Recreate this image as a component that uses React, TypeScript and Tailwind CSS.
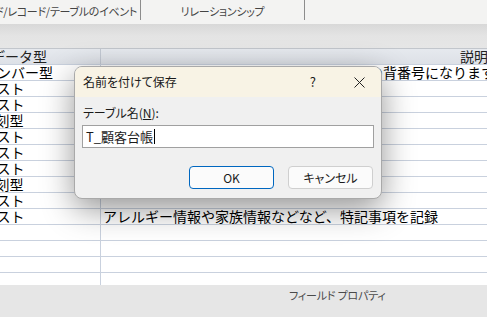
import React from "react"

const types = [
  "オートナンバー型",
  "短いテキスト",
  "短いテキスト",
  "日付/時刻型",
  "短いテキスト",
  "短いテキスト",
  "短いテキスト",
  "日付/時刻型",
  "短いテキスト",
  "長いテキスト",
]

const descs: Record<number, string> = {
  0: "顧客ごとに自動で割り振られる番号で顧客の背番号になります。",
  9: "アレルギー情報や家族情報などなど、特記事項を記録",
}

function Row({ type, desc }: { type?: string; desc?: string }) {
  const shift = type && type.includes("/") ? "ml-[-52px]" : "ml-[-59px]"
  return (
    <div className="flex h-4 shrink-0 border-t border-[#c9d1de] text-[14px] leading-[15px] text-black">
      <div className="w-[101px] shrink-0 overflow-hidden whitespace-nowrap border-r border-[#c9d1de]">
        <span className={shift + " inline-block"}>{type}</span>
      </div>
      <div className="flex-1 overflow-hidden whitespace-nowrap pl-[2px]">{desc}</div>
    </div>
  )
}

export default function App() {
  return (
    <div className="relative h-[317px] w-[487px] overflow-hidden bg-white font-['Noto_Sans_CJK_JP',sans-serif]">
      {/* ribbon strip */}
      <div className="flex h-6 items-start bg-[#f3f3f2] text-[11px] tracking-[-0.3px] text-[#444] [font-feature-settings:'palt']">
        <div className="flex h-5 w-[141px] items-end justify-end overflow-hidden whitespace-nowrap border-r border-[#8c8c8c] pb-[1px] pr-[3px]">
          フィールド/レコード/テーブルのイベント
        </div>
        <div className="flex h-5 w-[164px] items-end justify-center whitespace-nowrap border-r border-[#8c8c8c] pb-[1px]">
          リレーションシップ
        </div>
      </div>
      {/* gray band */}
      <div className="h-6 bg-gradient-to-b from-[#d8d8d8] via-[#e4e4e4] to-[#e6e6e6]" />

      {/* table design grid */}
      <div className="flex h-[237px] flex-col overflow-hidden">
        <div className="flex h-4 shrink-0 border-t border-[#c2c6cc] bg-gradient-to-b from-[#e6e9ee] to-[#dde1e7] text-[14px] leading-[15px] text-[#222]">
          <div className="w-[101px] shrink-0 overflow-hidden whitespace-nowrap border-r border-[#c2c8d2]">
            <span className="ml-[-9px] inline-block">データ型</span>
          </div>
          <div className="flex-1 overflow-hidden whitespace-nowrap">
            <span className="ml-[359px] inline-block">説明</span>
          </div>
        </div>
        {types.map((t, i) => (
          <Row key={i} type={t} desc={descs[i]} />
        ))}
        {Array.from({ length: 4 }).map((_, i) => (
          <Row key={"e" + i} />
        ))}
      </div>

      {/* field properties pane */}
      <div className="h-8 bg-[#e6e6e6] pl-[289px] pt-[2px] text-[11px] tracking-[-0.2px] text-[#4a4a4a] [font-feature-settings:'palt']">
        フィールド プロパティ
      </div>

      {/* save-as dialog */}
      <div className="absolute left-[74px] top-[66px] w-[308px] overflow-hidden rounded-[8px] border border-[#a9a9a9] bg-[#f0f0f0] text-[12px] text-[#1a1a1a] shadow-[0_10px_32px_rgba(0,0,0,0.42)] [font-feature-settings:'palt']">
        <div className="flex h-[30px] items-center bg-[#f8f3e5] pl-[8px]">
          <span>名前を付けて保存</span>
          <span className="ml-auto mr-[38px] text-[13px]">?</span>
          <svg width="11" height="11" viewBox="0 0 11 11" className="mr-[16px]">
            <path d="M0.5 0.5 L10.5 10.5 M10.5 0.5 L0.5 10.5" stroke="#222" strokeWidth="1" />
          </svg>
        </div>
        <div className="px-[7px] pb-[9px] pt-[7px]">
          <div className="h-[18px] pl-[1px]">
            テーブル名(<span className="underline">N</span>):
          </div>
          <div className="mt-[3px] flex h-[23px] items-center border border-[#a0a0a0] bg-white pl-[3px] text-[13px]">
            <span>T_顧客台帳</span>
            <span className="ml-[1px] h-[15px] w-px bg-black" />
          </div>
          <div className="mt-[18px] flex justify-end gap-[14px] pr-[1px]">
            <button className="h-[23px] w-[85px] rounded-[4px] border border-[#0067c0] bg-[#fbfbfb] text-[12px] text-[#1a1a1a]">
              OK
            </button>
            <button className="h-[23px] w-[85px] rounded-[4px] border border-[#cfcfcf] bg-[#fbfbfb] text-[12px] text-[#1a1a1a]">
              キャンセル
            </button>
          </div>
        </div>
      </div>
    </div>
  )
}
